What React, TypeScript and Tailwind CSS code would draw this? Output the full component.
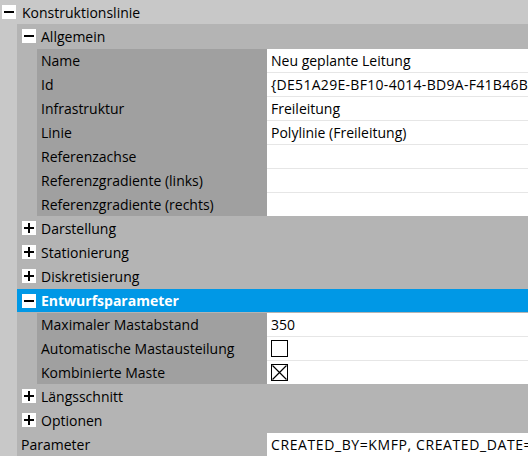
import React from 'react';

const font = { fontFamily: '"Open Sans", "Noto Sans", sans-serif' };

const Toggle = ({ open }: { open: boolean }) => (
  <svg width="14" height="14" viewBox="0 0 14 14" className="shrink-0">
    <rect x="0" y="0" width="14" height="14" fill="#fff" />
    <rect x="2" y="6" width="10" height="2" fill="#000" />
    {!open && <rect x="6" y="2" width="2" height="10" fill="#000" />}
  </svg>
);

const CheckBox = ({ checked }: { checked: boolean }) => (
  <svg width="17" height="17" viewBox="0 0 17 17">
    <rect x="0.5" y="0.5" width="16" height="16" fill="#fff" stroke="#000" />
    {checked && (
      <path d="M1.5 1.5 L15.5 15.5 M15.5 1.5 L1.5 15.5" stroke="#000" strokeWidth="1.2" />
    )}
  </svg>
);

const PropRow = ({ label, value, first }: { label: string; value: React.ReactNode; first?: boolean }) => (
  <div className={first ? 'flex h-[23px]' : 'flex h-[24px]'}>
    <div className="w-[230px] shrink-0 pl-[4px] flex items-center whitespace-nowrap">{label}</div>
    <div
      className={
        first
          ? 'flex-1 min-w-0 bg-white pl-[4px] flex items-center whitespace-nowrap overflow-hidden'
          : 'flex-1 min-w-0 bg-white pl-[4px] flex items-center whitespace-nowrap overflow-hidden border-t border-[#e6e6e6]'
      }
    >
      {value}
    </div>
  </div>
);

const GroupRow = ({ label, open }: { label: string; open: boolean }) => (
  <div className="h-[24px] flex items-center pl-[5px] gap-[5px] whitespace-nowrap">
    <Toggle open={open} />
    <span>{label}</span>
  </div>
);

export default function App() {
  return (
    <div className="w-[528px] h-[456px] overflow-hidden bg-[#c8c8c8] text-black text-[14px]" style={font}>
      {/* Konstruktionslinie */}
      <div className="h-[24px] flex items-center pl-[2px] gap-[6px] whitespace-nowrap">
        <Toggle open />
        <span>Konstruktionslinie</span>
      </div>

      <div className="ml-[17px] bg-[#b4b4b4]">
        <GroupRow label="Allgemein" open />
        <div className="mt-px ml-[20px] bg-[#a0a0a0] flex flex-col">
          <PropRow first label="Name" value="Neu geplante Leitung" />
          <PropRow label="Id" value={<span className="tracking-[0.3px]">{'{DE51A29E-BF10-4014-BD9A-F41B46B2C7E1}'}</span>} />
          <PropRow label="Infrastruktur" value="Freileitung" />
          <PropRow label="Linie" value="Polylinie (Freileitung)" />
          <PropRow label="Referenzachse" value="" />
          <PropRow label="Referenzgradiente (links)" value="" />
          <PropRow label="Referenzgradiente (rechts)" value="" />
        </div>

        <GroupRow label="Darstellung" open={false} />
        <GroupRow label="Stationierung" open={false} />
        <GroupRow label="Diskretisierung" open={false} />

        <div className="mt-px h-[23px] bg-[#0098e6] flex items-center pl-[5px] gap-[5px] whitespace-nowrap text-white font-bold">
          <Toggle open />
          <span>Entwurfsparameter</span>
        </div>
        <div className="mt-px ml-[20px] bg-[#a0a0a0] flex flex-col">
          <PropRow first label="Maximaler Mastabstand" value="350" />
          <PropRow label="Automatische Mastausteilung" value={<CheckBox checked={false} />} />
          <PropRow label="Kombinierte Maste" value={<CheckBox checked />} />
        </div>

        <GroupRow label="Längsschnitt" open={false} />
        <GroupRow label="Optionen" open={false} />

        <div className="mt-px flex h-[23px]">
          <div className="w-[250px] shrink-0 pl-[4px] flex items-center whitespace-nowrap">Parameter</div>
          <div className="flex-1 min-w-0 bg-white pl-[4px] flex items-center whitespace-nowrap overflow-hidden tracking-[0.6px]">
            CREATED_BY=KMFP, CREATED_DATE=2023-05-12
          </div>
        </div>
      </div>
    </div>
  );
}
